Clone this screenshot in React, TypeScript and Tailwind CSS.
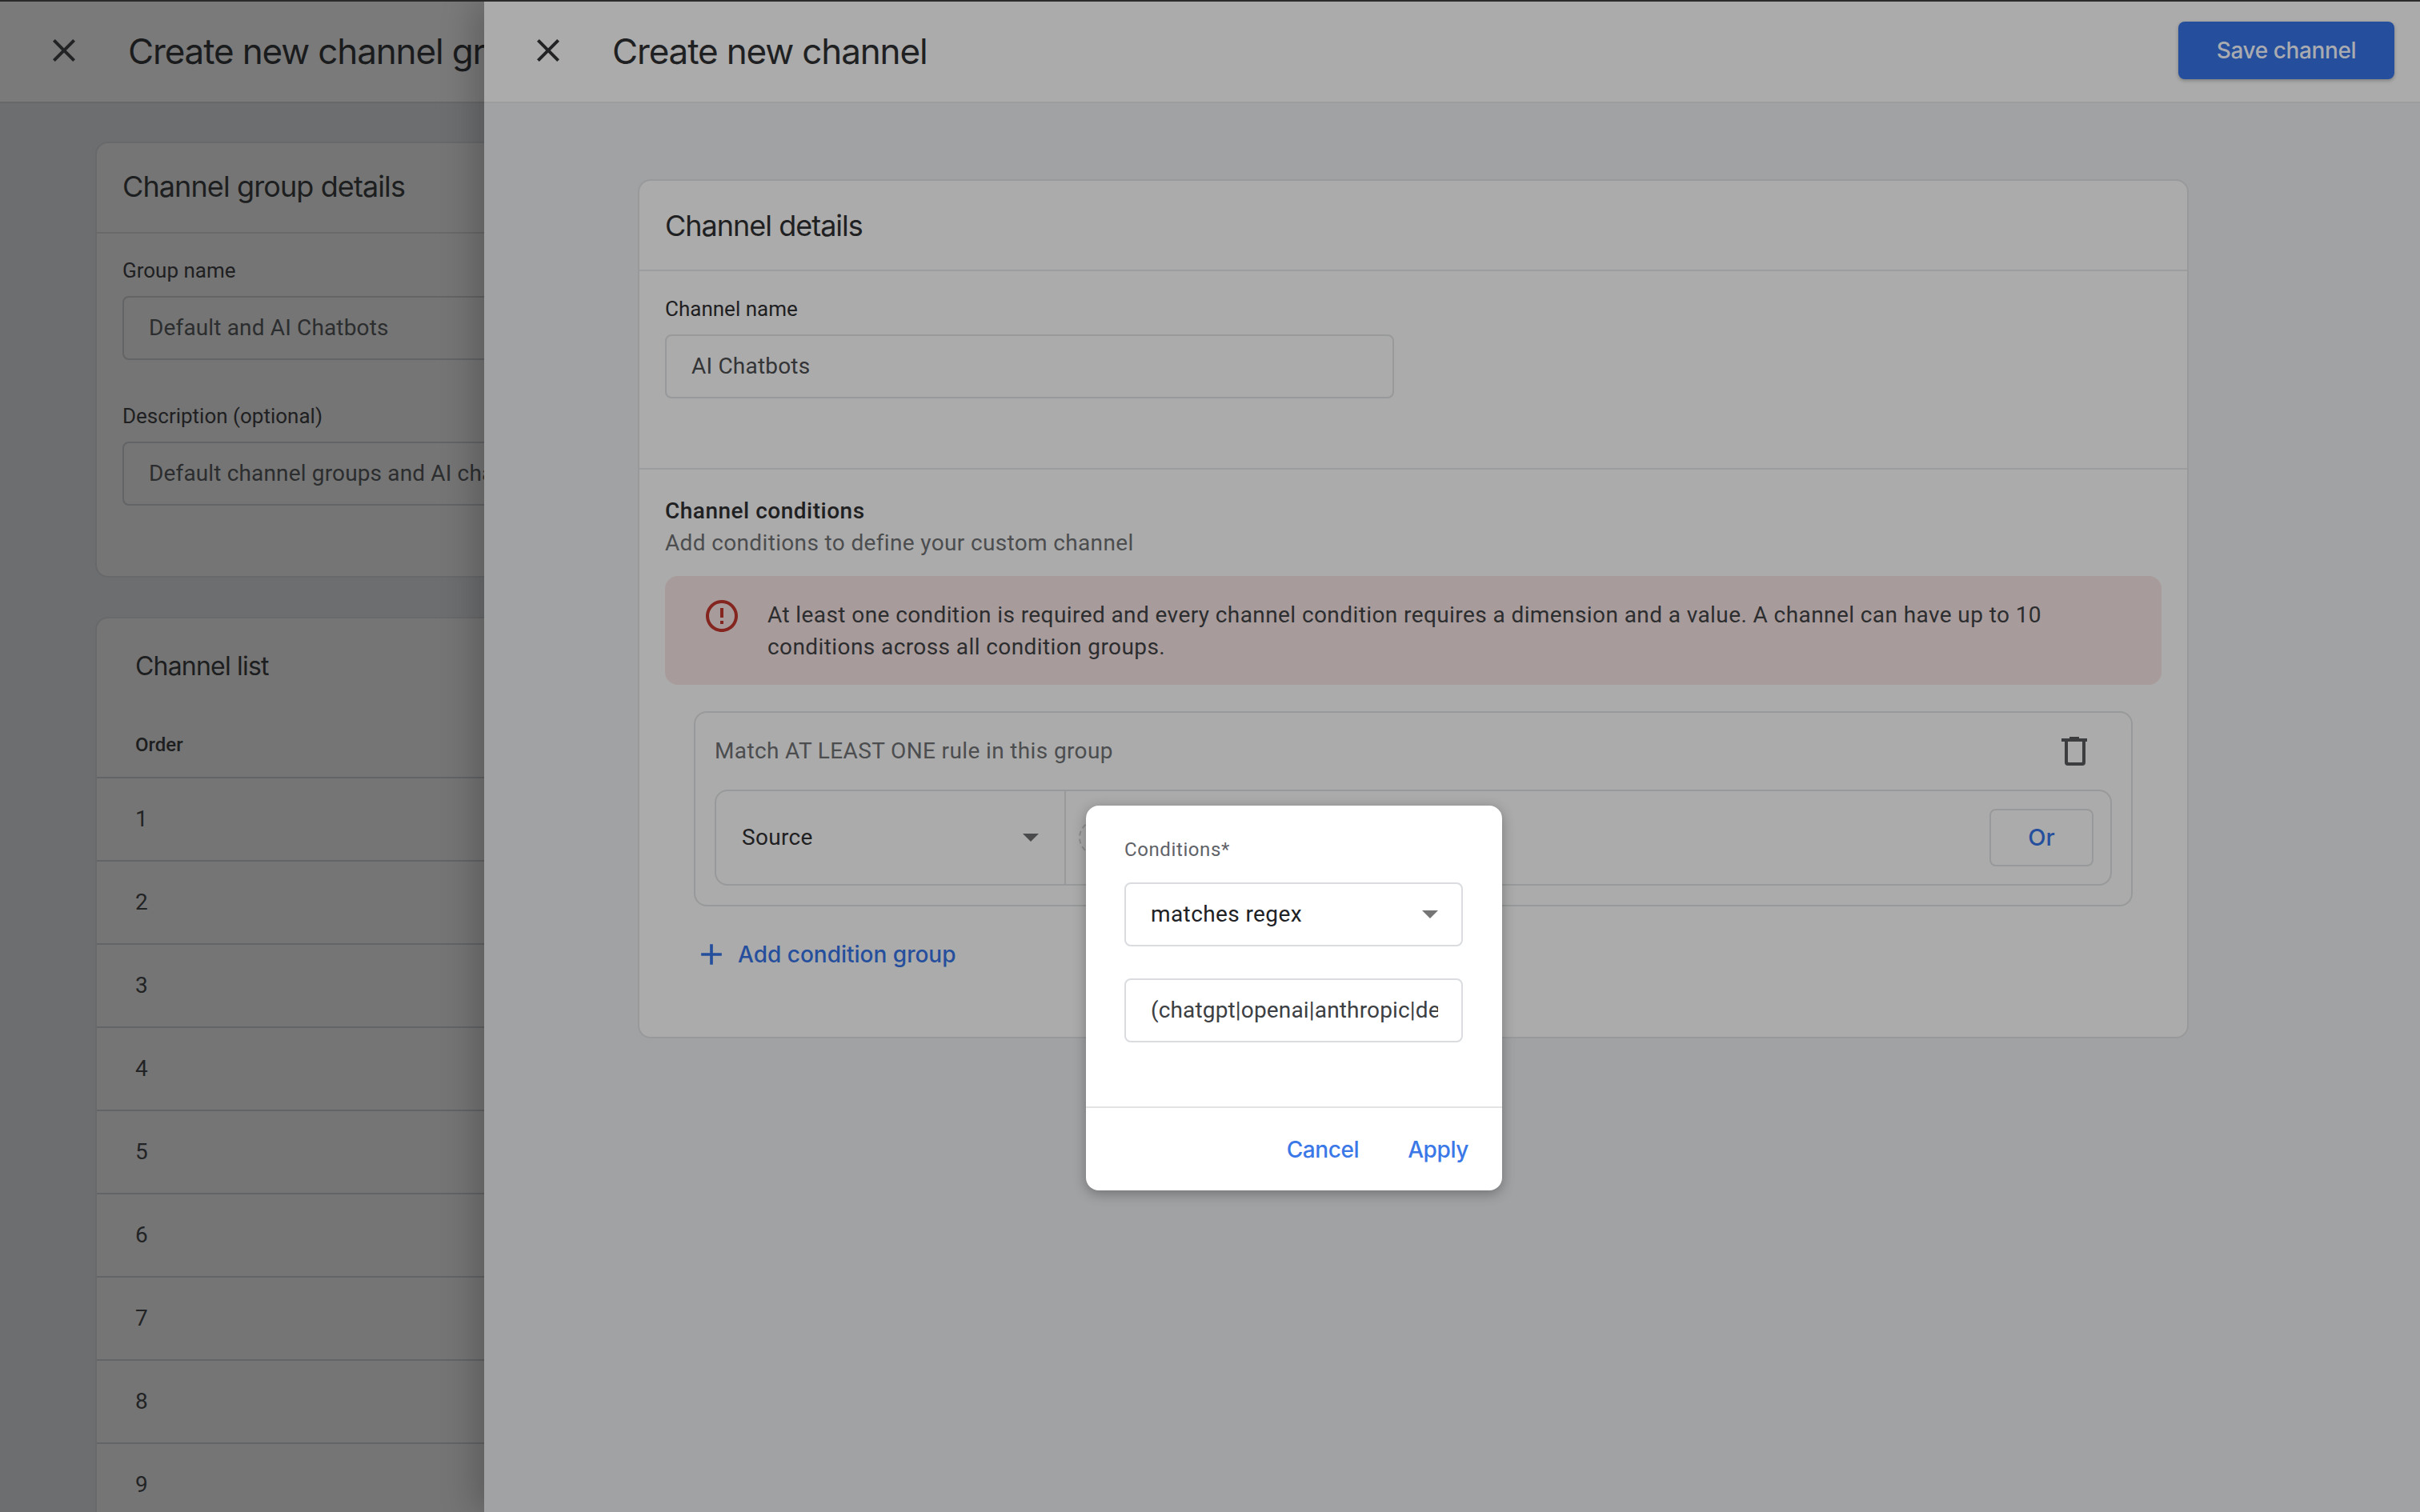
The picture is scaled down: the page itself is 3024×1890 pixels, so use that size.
import React from 'react';

const sans = "font-['Roboto',sans-serif]";
const display = "font-['Inter',sans-serif]";

const CloseIcon = () => (
    <svg viewBox="0 0 24 24" className="w-12 h-12 mb-[3px] fill-[#222325]">
        <path d="M19 6.41L17.59 5 12 10.59 6.41 5 5 6.41 10.59 12 5 17.59 6.41 19 12 13.41 17.59 19 19 17.59 13.41 12z" />
    </svg>
);

const Caret = ({ color }: { color: string }) => (
    <svg viewBox="0 0 20 10" className={`w-5 h-2.5 ${color}`}>
        <path d="M0 0h20L10 10z" />
    </svg>
);

const rows = [1, 2, 3, 4, 5, 6, 7, 8, 9];

const GroupPanel = () => (
    <div className="w-[605px] shrink-0 h-full overflow-hidden bg-[#6d6e70]">
        <div className="h-[127px] w-[1200px] flex items-center pl-[56px] bg-[#7a7a7a] border-b-2 border-[#686869]">
            <CloseIcon />
            <h1 className={`${display} ml-[56px] mb-[1px] text-[44px] tracking-[-1.15px] text-[#1a1b1d] whitespace-nowrap`}>Create new channel group</h1>
        </div>
        <div className="w-[1600px] pl-[119px] pt-[48px]">
            <section className="h-[545px] rounded-tl-[16px] rounded-bl-[16px] border-2 border-[#68696a] bg-[#757575]">
                <div className="h-[113px] flex items-center pl-[32px] pb-[3px] border-b-2 border-[#68696a]">
                    <h2 className={`${display} text-[36px] tracking-[-0.9px] text-[#1d1e20]`}>Channel group details</h2>
                </div>
                <div className="pl-[32px] pt-[29px]">
                    <p className={`${sans} text-[26px] leading-[34px] text-[#1f2022]`}>Group name</p>
                    <div className={`${sans} mt-[15px] h-[80px] w-[1200px] flex items-center pl-[31px] rounded-[8px] border-2 border-[#636466] text-[28px] tracking-[0.15px] text-[#2c2d2f]`}>Default and AI Chatbots</div>
                    <p className={`${sans} mt-[53px] text-[26px] leading-[34px] text-[#1f2022]`}>Description (optional)</p>
                    <div className={`${sans} mt-[15px] h-[80px] w-[1200px] flex items-center pl-[31px] rounded-[8px] border-2 border-[#636466] text-[28px] tracking-[0.15px] text-[#2c2d2f]`}>Default channel groups and AI chatbots</div>
                </div>
            </section>
            <section className="mt-[49px] rounded-tl-[16px] border-2 border-b-0 border-[#68696a] bg-[#757575]">
                <div className={`${display} h-[126px] flex items-center pl-[48px] pb-[6px] text-[32px] tracking-[-0.8px] text-[#1d1e20]`}>Channel list</div>
                <div className={`${sans} h-[72px] pl-[48px] pt-[14px] text-[24px] font-medium text-[#1d1e20]`}>Order</div>
                {rows.map((n) => (
                    <div key={n} className={`${sans} h-[104px] flex items-center pl-[48px] border-t-2 border-[#636466] text-[28px] text-[#222325]`}>{n}</div>
                ))}
            </section>
        </div>
    </div>
);

const ChannelPanel = () => (
    <div className="relative z-10 flex-1 h-full bg-[#a1a2a4] shadow-[-12px_0_40px_rgba(0,0,0,0.22)]">
        <header className="h-[127px] flex items-center pl-[56px] pr-[32px] bg-[#ababab] border-b-2 border-[#9c9d9e]">
            <CloseIcon />
            <h1 className={`${display} ml-[56px] mb-[1px] text-[44px] tracking-[-1.15px] text-[#1f2022] whitespace-nowrap`}>Create new channel</h1>
            <button className={`${display} ml-auto mb-[3px] w-[270px] h-[72px] rounded-[8px] bg-[#254f9d] text-[28px] font-medium tracking-[-0.4px] text-[#a9abb0] shadow-[0_2px_4px_rgba(0,0,0,0.25)]`}>Save channel</button>
        </header>
        <section className="ml-[192px] mt-[95px] w-[1938px] h-[1074px] rounded-[16px] border-2 border-[#98999a] bg-[#ababab]">
            <div className="h-[113px] flex items-center pl-[32px] border-b-2 border-[#9c9d9e]">
                <h2 className={`${display} text-[36px] tracking-[-1px] text-[#1f2022]`}>Channel details</h2>
            </div>
            <div className="h-[248px] pl-[32px] pt-[30px] border-b-2 border-[#9c9d9e]">
                <p className={`${sans} text-[26px] leading-[34px] text-[#1f2022]`}>Channel name</p>
                <div className={`${sans} mt-[15px] h-[80px] w-[911px] flex items-center pl-[31px] rounded-[8px] border-2 border-[#98999a] text-[28px] tracking-[0.2px] text-[#333436]`}>AI Chatbots</div>
            </div>
            <div className={`${sans} pl-[32px] pr-[32px] pt-[34px]`}>
                <p className="text-[28px] leading-[36px] font-medium tracking-[0.5px] text-[#1f2022]">Channel conditions</p>
                <p className="mt-[4px] text-[28px] leading-[36px] tracking-[0.35px] text-[#4c4d4f]">Add conditions to define your custom channel</p>
                <div className="mt-[23px] h-[136px] w-[1870px] flex items-start pl-[47px] pt-[29px] rounded-[16px] bg-[#a89b9b]">
                    <svg viewBox="0 0 24 24" className="w-12 h-12 shrink-0 -mt-[3px] fill-[#84261f]">
                        <path d="M11 15h2v2h-2zm0-8h2v6h-2zm.99-5C6.47 2 2 6.48 2 12s4.47 10 9.99 10C17.52 22 22 17.52 22 12S17.52 2 11.99 2zM12 20c-4.42 0-8-3.58-8-8s3.58-8 8-8 8 3.58 8 8-3.58 8-8 8z" />
                    </svg>
                    <p className="ml-[33px] w-[1680px] text-[28px] leading-[40px] tracking-[0.41px] text-[#2c2d2f]">At least one condition is required and every channel condition requires a dimension and a value. A channel can have up to 10 conditions across all condition groups.</p>
                </div>
                <div className="mt-[33px] ml-[36px] w-[1798px] h-[244px] rounded-[16px] border-2 border-[#98999a] px-[24px]">
                    <div className="h-[96px] flex items-center justify-between pr-[31px]">
                        <span className="text-[28px] tracking-[0.37px] text-[#4c4d4f]">Match AT LEAST ONE rule in this group</span>
                        <svg viewBox="0 0 32 36" className="w-8 h-9 fill-[#3c3d3f]">
                            <path fillRule="evenodd" d="M10 0h12v2h10v4h-2v26a4 4 0 0 1-4 4H8a4 4 0 0 1-4-4V6H0V2h10zM8 6v25a1 1 0 0 0 1 1h16a1 1 0 0 0 1-1V6z" />
                        </svg>
                    </div>
                    <div className="h-[120px] w-[1746px] flex items-center rounded-[16px] border-2 border-[#98999a]">
                        <div className="w-[437px] h-full flex items-center justify-between pl-[32px] pr-[32px] border-r-2 border-[#98999a]">
                            <span className="text-[28px] tracking-[0.3px] text-[#1f2022]">Source</span>
                            <Caret color="fill-[#4a4b4d]" />
                        </div>
                        <div className="flex-1 flex items-center justify-between pr-[21px] pl-[16px]">
                            <span className="w-[44px] h-[44px] rounded-full border-2 border-dashed border-[#8c8d8e]" />
                            <button className={`${display} w-[130px] h-[72px] rounded-[8px] border-2 border-[#98999a] text-[29px] font-medium text-[#254f9d]`}>Or</button>
                        </div>
                    </div>
                </div>
                <div className={`${display} mt-[38px] ml-[36px] flex items-center gap-[11px] text-[28px] font-medium tracking-[0px] text-[#254f9d]`}>
                    <svg viewBox="0 0 24 24" className="w-[44px] h-[44px] fill-[#254f9d]">
                        <path d="M19 13h-6v6h-2v-6H5v-2h6V5h2v6h6z" />
                    </svg>
                    Add condition group
                </div>
            </div>
        </section>
    </div>
);

const ConditionsDialog = () => (
    <div className="absolute z-20 left-[1357px] top-[1005px] w-[520px] h-[481px] flex flex-col rounded-[16px] bg-white shadow-[0_4px_16px_rgba(0,0,0,0.3)]">
        <div className={`${sans} flex-1 pl-[48px] pr-[49px] pt-[40px]`}>
            <p className="text-[24px] leading-[30px] tracking-[0.6px] text-[#5f6368]">Conditions*</p>
            <div className="mt-[26px] h-[80px] flex items-center justify-between pl-[31px] pr-[29px] rounded-[8px] border-2 border-[#dadce0] text-[28px] tracking-[0.4px] text-[#202124]">
                matches regex
                <Caret color="fill-[#757575]" />
            </div>
            <div className="mt-[40px] h-[80px] flex items-center pl-[31px] pr-[29px] rounded-[8px] border-2 border-[#dadce0] text-[28px] tracking-[0.15px] text-[#3c4043] overflow-hidden whitespace-nowrap">
                <span className="block overflow-hidden">(chatgpt|openai|anthropic|deepseek|perplexity)</span>
            </div>
        </div>
        <div className={`${display} h-[105px] flex items-center justify-end gap-[61px] pr-[42px] border-t-2 border-[#e3e4e6] text-[28px] font-medium tracking-[-0.4px] text-[#3b78e7]`}>
            <span>Cancel</span>
            <span>Apply</span>
        </div>
    </div>
);

const App: React.FC = () => {
    return (
        <div className="relative w-[3024px] h-[1890px] flex overflow-hidden border-t-2 border-[#2a2a2a] bg-[#6d6e70]">
            <GroupPanel />
            <ChannelPanel />
            <ConditionsDialog />
        </div>
    );
};

export default App;
